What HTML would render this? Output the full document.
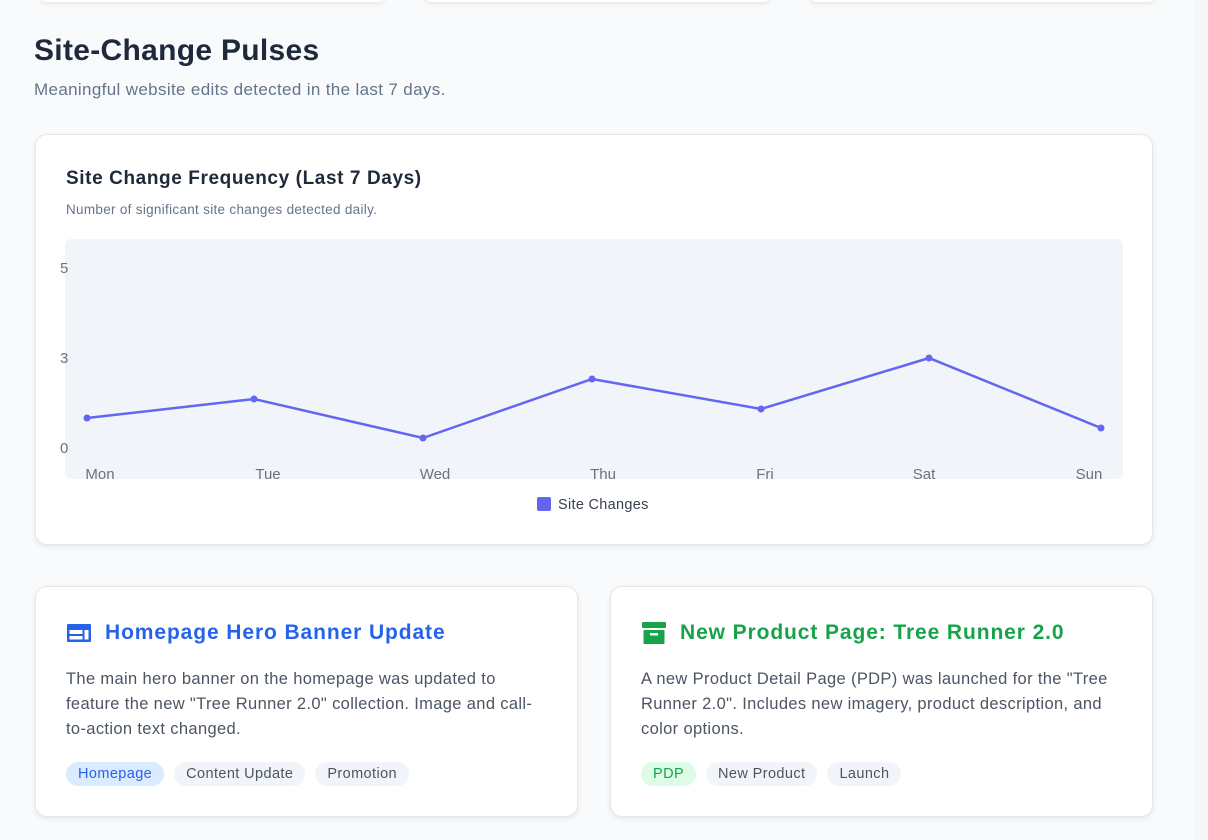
<!DOCTYPE html>
<html><head><meta charset="utf-8"><style>
*{box-sizing:border-box;margin:0;padding:0}
body{width:1208px;height:840px;overflow:hidden;background:#f8fafc;font-family:"Liberation Sans",sans-serif;position:relative}
.top{position:absolute;top:-10px;height:12px;background:#fff;border-radius:8px;box-shadow:0 2px 4px rgba(0,0,0,.08)}
.card{position:absolute;background:#fff;border:1px solid #e5e7eb;border-radius:12px;box-shadow:0 2px 6px rgba(0,0,0,.08)}
h1{position:absolute;left:34px;top:34px;font-size:30px;letter-spacing:.3px;font-weight:700;color:#1e293b}
.sub{position:absolute;left:34px;top:80px;font-size:17px;letter-spacing:.35px;color:#64748b}
.ct{position:absolute;left:30px;top:33px;font-size:19px;letter-spacing:.6px;font-weight:700;color:#1e293b}
.cs{position:absolute;left:30px;top:67px;font-size:13.5px;letter-spacing:.3px;color:#64748b}
.t{position:absolute;left:30px;top:34px;font-size:21px;letter-spacing:.9px;font-weight:700;display:flex;align-items:center;gap:13px}
.d{position:absolute;left:30px;top:80px;width:468px;font-size:16.5px;letter-spacing:.35px;line-height:25px;color:#4b5563}
.tags{position:absolute;left:30px;top:175px;display:flex;gap:10px}
.tag{font-size:14.5px;letter-spacing:.4px;padding:4px 12px;border-radius:12px;background:#f1f5f9;color:#4b5563}
</style></head><body>
<div class="top" style="left:40px;width:345px"></div>
<div class="top" style="left:425px;width:345px"></div>
<div class="top" style="left:810px;width:345px"></div>
<div style="position:absolute;right:0;top:0;width:14px;height:840px;background:#f6f7f9"></div>
<h1>Site-Change Pulses</h1>
<div class="sub">Meaningful website edits detected in the last 7 days.</div>
<div class="card" style="left:35px;top:134px;width:1118px;height:411px">
<div class="ct">Site Change Frequency (Last 7 Days)</div>
<div class="cs">Number of significant site changes detected daily.</div>
</div>
<svg style="position:absolute;left:0;top:0" width="1208" height="840">
<rect x="65" y="239" width="1058" height="240" rx="6" fill="#f1f5f9"/>
<g font-family="Liberation Sans" font-size="15" fill="#6b7280">
<text x="60" y="273">5</text><text x="60" y="363">3</text><text x="60" y="453">0</text>
<g text-anchor="middle"><text x="100" y="479">Mon</text><text x="268" y="479">Tue</text><text x="435" y="479">Wed</text><text x="603" y="479">Thu</text><text x="765" y="479">Fri</text><text x="924" y="479">Sat</text><text x="1089" y="479">Sun</text></g>
</g>
<polyline points="87,418 254,399 423,438 592,379 761,409 929,358 1101,428" fill="none" stroke="#6366f1" stroke-width="2.5"/>
<g fill="#6366f1"><circle cx="87" cy="418" r="3.5"/><circle cx="254" cy="399" r="3.5"/><circle cx="423" cy="438" r="3.5"/><circle cx="592" cy="379" r="3.5"/><circle cx="761" cy="409" r="3.5"/><circle cx="929" cy="358" r="3.5"/><circle cx="1101" cy="428" r="3.5"/></g>
<rect x="537" y="497" width="14" height="14" rx="2" fill="#6366f1"/>
<text x="558" y="509" font-family="Liberation Sans" font-size="14.5" letter-spacing=".3" fill="#374151">Site Changes</text>
</svg>
<div class="card" style="left:35px;top:586px;width:543px;height:231px">
<div class="t" style="color:#2563eb"><svg width="26" height="20" viewBox="0 0 26 20"><rect x="1" y="1" width="24" height="18" rx="1" fill="#2563eb"/><rect x="3.5" y="7" width="13" height="4" fill="#fff"/><rect x="3.5" y="13" width="13" height="3.5" fill="#fff"/><rect x="18.5" y="7" width="4" height="9.5" fill="#fff"/></svg>Homepage Hero Banner Update</div>
<div class="d">The main hero banner on the homepage was updated to feature the new "Tree Runner 2.0" collection. Image and call-to-action text changed.</div>
<div class="tags"><span class="tag" style="background:#dbeafe;color:#2563eb">Homepage</span><span class="tag">Content Update</span><span class="tag">Promotion</span></div>
</div>
<div class="card" style="left:610px;top:586px;width:543px;height:231px">
<div class="t" style="color:#16a34a"><svg width="26" height="24" viewBox="0 0 26 24"><rect x="1" y="1" width="24" height="6" rx="1" fill="#16a34a"/><rect x="2.5" y="9" width="21" height="14" rx="1" fill="#16a34a"/><rect x="9" y="12" width="8" height="2.5" fill="#fff"/></svg>New Product Page: Tree Runner 2.0</div>
<div class="d">A new Product Detail Page (PDP) was launched for the "Tree Runner 2.0". Includes new imagery, product description, and color options.</div>
<div class="tags"><span class="tag" style="background:#dcfce7;color:#16a34a">PDP</span><span class="tag">New Product</span><span class="tag">Launch</span></div>
</div>
</body></html>
